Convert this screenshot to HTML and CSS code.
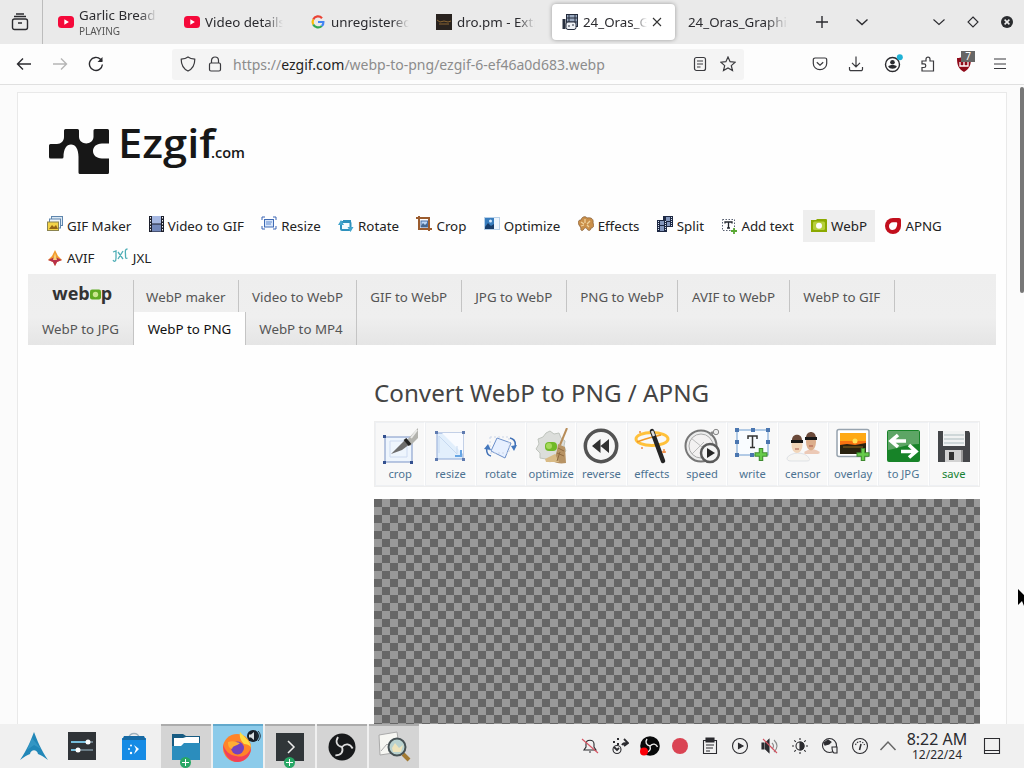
FILE: index.html
```html
<!DOCTYPE html>
<html lang="en">
<head>
  <meta charset="UTF-8">
  <title>Convert WebP to PNG / APNG</title>
  <link rel="stylesheet" href="styles.css">
</head>
<body>
  <div class="browser">
    <div class="tabbar">
      <div class="view-btn">
        <svg width="18" height="18" viewBox="0 0 18 18" class="line"><rect x="1.5" y="6" width="15" height="10.5" rx="2"/><path d="M3 3.5h12M5 1h8M7 10h4"/></svg>
      </div>
      <div class="tab">
        <svg width="16" height="16" viewBox="0 0 16 16"><rect y="2" width="16" height="12" rx="3.5" fill="#f5093a"/><path d="M6.3 5.3v5.4l4.6-2.7z" fill="#fff"/></svg>
        <div class="tab-title playing"><span>Garlic Bread</span><small>PLAYING</small></div>
      </div>
      <div class="tab">
        <svg width="16" height="16" viewBox="0 0 16 16"><rect y="2" width="16" height="12" rx="3.5" fill="#f5093a"/><path d="M6.3 5.3v5.4l4.6-2.7z" fill="#fff"/></svg>
        <div class="tab-title">Video details</div>
      </div>
      <div class="tab">
        <svg width="16" height="16" viewBox="0 0 16 16" fill="none" stroke-width="2.2"><path d="M12 4.2A5.3 5.3 0 0 0 3.2 5.5" stroke="#ea4335"/><path d="M3.2 5.5a5.5 5.5 0 0 0 0 5" stroke="#fbbc05"/><path d="M3.2 10.5a5.5 5.5 0 0 0 8.6 1.5" stroke="#34a853"/><path d="M11.8 12A5 5 0 0 0 13.4 8H8" stroke="#4285f4"/></svg>
        <div class="tab-title">unregistered</div>
      </div>
      <div class="tab">
        <svg width="16" height="16" viewBox="0 0 16 16"><rect width="16" height="16" fill="#29231f"/><path d="M1 6l3 2 4-1 4 1 3-1M3 10h10" stroke="#8a6532" fill="none"/></svg>
        <div class="tab-title">dro.pm - Extra</div>
      </div>
      <div class="tab active">
        <svg width="16" height="16" viewBox="0 0 16 16"><rect x="4.5" y=".5" width="11" height="12" fill="#9aa9c0" stroke="#242c3c"/><path d="M7 1v11M13 1v11M5 4h10M5 8h10" stroke="#242c3c"/><rect x=".5" y="5" width="3" height="10" fill="#28303f"/><rect x="4" y="8" width="10" height="7.5" rx="2" fill="#eef1f6" stroke="#242c3c"/><path d="M6 12h2M10 11h2" stroke="#242c3c"/></svg>
        <div class="tab-title">24_Oras_Graphics</div>
        <svg class="tab-close" width="10" height="10" viewBox="0 0 10 10"><path d="M1 1l8 8M9 1L1 9"/></svg>
      </div>
      <div class="tab plain">
        <div class="tab-title">24_Oras_Graphics</div>
      </div>
      <div class="tab-tools">
        <svg width="14" height="14" viewBox="0 0 14 14" class="line"><path d="M7 1v12M1 7h12"/></svg>
        <svg width="14" height="14" viewBox="0 0 14 14" class="line"><path d="M1.5 4.5L7 9.5l5.5-5"/></svg>
      </div>
      <div class="window-tools">
        <svg width="14" height="14" viewBox="0 0 14 14" class="line thin"><path d="M1.5 4.5L7 9.5l5.5-5"/></svg>
        <svg width="14" height="14" viewBox="0 0 14 14" class="line thin"><path d="M7 2l5 5-5 5-5-5z"/></svg>
        <svg width="14" height="14" viewBox="0 0 14 14"><circle cx="7" cy="7" r="6" fill="#2a2c2f"/><path d="M4.6 4.6l4.8 4.8M9.4 4.6L4.6 9.4" stroke="#eee" stroke-width="1.5"/></svg>
      </div>
    </div>

    <div class="toolbar">
      <div class="nav-buttons">
        <svg width="16" height="16" viewBox="0 0 16 16" class="line"><path d="M15 8H1.5M7 2.5L1.5 8 7 13.5"/></svg>
        <svg width="16" height="16" viewBox="0 0 16 16" class="line faded"><path d="M1 8h13.5M9 2.5L14.5 8 9 13.5"/></svg>
        <svg width="16" height="16" viewBox="0 0 16 16" class="line"><path d="M14.4 8.5A6.5 6.5 0 1 1 12.5 3.3L14 4.8"/><path d="M14.5 1v5h-5z" fill="#2b2b2f" stroke="none"/></svg>
      </div>
      <div class="urlbar">
        <svg width="16" height="16" viewBox="0 0 16 16" class="line light"><path d="M8 1C6 2.5 3.5 3 1.2 3.2c0 5.8 2 9.5 6.8 11.8 4.8-2.3 6.8-6 6.8-11.8C12.5 3 10 2.5 8 1z"/></svg>
        <svg width="14" height="16" viewBox="0 0 14 16" class="line light"><rect x="1.5" y="7" width="11" height="8" rx="1.5"/><path d="M3.5 7V4.5a3.5 3.5 0 0 1 7 0V7"/></svg>
        <div class="url">https://<b>ezgif.com</b>/webp-to-png/ezgif-6-ef46a0d683.webp</div>
        <svg width="16" height="16" viewBox="0 0 16 16" class="line light"><rect x="2.5" y="1.5" width="11" height="13" rx="2"/><path d="M5 5h6M5 8h6M5 11h3.5"/></svg>
        <svg width="16" height="16" viewBox="0 0 16 16" class="line light"><path d="M8 1l2.1 4.7 5.1.5-3.9 3.4 1.2 5L8 12l-4.5 2.6 1.2-5L.8 6.2l5.1-.5z"/></svg>
      </div>
      <div class="ext-buttons">
        <svg width="16" height="16" viewBox="0 0 16 16" class="line light"><path d="M3 2h10a1.7 1.7 0 0 1 1.7 1.7V7.5a6.7 6.2 0 0 1-13.4 0V3.7A1.7 1.7 0 0 1 3 2z"/><path d="M4.8 6.3L8 9.3l3.2-3"/></svg>
        <svg width="16" height="16" viewBox="0 0 16 16" class="line light"><path d="M8 .5v10M4 6.8l4 4 4-4M1.5 11v2.2A1.5 1.5 0 0 0 3 14.7h10a1.5 1.5 0 0 0 1.5-1.5V11"/></svg>
        <svg width="20" height="20" viewBox="0 0 20 20" class="line"><circle cx="9.5" cy="10.5" r="7"/><circle cx="9.5" cy="8.2" r="2.3" fill="#2b2b2f" stroke="none"/><path d="M5.2 12.5c1-2 7.6-2 8.6 0-1.5 3-7 3-8.6 0z" fill="#2b2b2f" stroke="none"/><circle cx="16.8" cy="3.2" r="3" fill="#1fb2d6" stroke="none"/></svg>
        <svg width="16" height="16" viewBox="0 0 16 16" class="line light"><path d="M2 5h4V3.2a2 2 0 0 1 4 0V5h3.5v10H2v-3.5h2a1.8 1.8 0 0 0 0-3.6H2z"/></svg>
        <div class="ublock">
          <svg width="16" height="16" viewBox="0 0 16 16"><path d="M8 0c2 1.5 4.5 2 7 2 0 7-1.5 11-7 14C2.5 13 1 9 1 2c2.5 0 5-.5 7-2z" fill="#900b1b"/><path d="M4 6v4h4V6M8 10h4V6" stroke="#fff" fill="none" stroke-width="1.3"/></svg>
          <span class="badge">7</span>
        </div>
        <svg width="16" height="16" viewBox="0 0 16 16" class="line light"><path d="M2 3h12M2 8h12M2 12.5h12"/></svg>
      </div>
    </div>

    <div class="viewport">
      <div class="page">
        <div class="logo">
          <svg width="200" height="54" viewBox="0 0 200 54">
            <path d="M17.5 5h12A1.500 1.500 0 0 1 31 6.500V13c.5 8.500 14 8.500 14.500 0V6.500A1.500 1.500 0 0 1 47 5h12.500A1.500 1.500 0 0 1 61 6.500V19.500H54c-12 0-12 15 0 15h7V48.500a1.500 1.500 0 0 1-1.500 1.500H32a1.500 1.500 0 0 1-1.500-1.500V33c0-8-3-12.500-7.500-12.500S15.500 25 15.500 33a1.500 1.500 0 0 1-1.500 1.500H2.500A1.500 1.500 0 0 1 1 33V21.500A1.500 1.500 0 0 1 2.500 20H9c4 0 7-3 7-7V6.500A1.500 1.500 0 0 1 17.500 5z" fill="#171717"/>
            <text x="70" y="34" class="logo-name" textLength="97" lengthAdjust="spacingAndGlyphs">Ezgif</text>
            <text x="163" y="34" class="logo-com" textLength="34" lengthAdjust="spacingAndGlyphs">.com</text>
          </svg>
        </div>

        <nav class="main-menu">
          <a><svg width="16" height="16" viewBox="0 0 16 16"><rect x="4.5" y=".5" width="11" height="9" fill="#dbe8f4" stroke="#5f86ad"/><rect x="2.5" y="3" width="11" height="9" fill="#eef5fb" stroke="#5f86ad"/><rect x=".5" y="6" width="11" height="8.5" fill="#f3d348" stroke="#8b8450"/><path d="M2 13l3-4 2 2 2-2 2 4z" fill="#946416"/></svg>GIF Maker</a>
          <a><svg width="15" height="16" viewBox="0 0 15 16"><rect width="15" height="16" fill="#1c1f2c"/><rect x="3" width="9" height="7.5" fill="#a6b8e2"/><rect x="3" y="8.5" width="9" height="7" fill="#7388ba"/><path d="M1.5 1v15M13.5 1v15" stroke="#f2f2f2" stroke-dasharray="1.5 1.5"/></svg>Video to GIF</a>
          <a><svg width="16" height="16" viewBox="0 0 16 16"><rect x="3.5" y="3.5" width="9" height="7.5" fill="#d8e6fa" stroke="#3f6bb5"/><path d="M5 6h6M5 8h5" stroke="#628bce"/><path d="M1 4V1h3M12 1h3v3M1 10v3h3M12 13h3v-3" fill="none" stroke="#3a65b4"/></svg>Resize</a>
          <a class="low"><svg width="16" height="16" viewBox="0 0 16 16"><rect x="3" y="4" width="9.5" height="8" rx="1" fill="#f4fbff" stroke="#2e91bd" stroke-width="2"/><path d="M0 7l3-5 3 5zM9.5 9l3 5 3-5z" fill="#42a5cd"/><path d="M5 3h8" stroke="#2e91bd" stroke-width="2"/></svg>Rotate</a>
          <a><svg width="16" height="16" viewBox="0 0 16 16"><path d="M3 0v13h13M0 2h13v13" fill="none" stroke="#9b5c2e" stroke-width="2"/><rect x="5" y="5" width="6.5" height="6" fill="#bbd5f4" stroke="#4870a7"/><path d="M5 10l2-3 2 2 2-2v4H5z" fill="#466891"/></svg>Crop</a>
          <a><svg width="16" height="16" viewBox="0 0 16 16"><rect x=".5" y="1.5" width="15" height="12" fill="#edf5fd" stroke="#b8d0e8"/><rect x="1" y="2" width="9" height="11" fill="#387dbe"/><path d="M1 11l3-4 3 3 3-2v5H1z" fill="#173d6b"/><circle cx="6.5" cy="5" r="1.5" fill="#d5eaff"/></svg>Optimize</a>
          <a><svg width="16" height="16" viewBox="0 0 16 16"><path d="M1 9c-2-4 0-5 2-5 1-4 5-4 6-2 4-1 7 1 6 5 2 3 0 5-2 5 0 3-3 3-4 1-1-1-2-2-3 0-2 3-4 1-3-1z" fill="#c98f4a" stroke="#80562e" stroke-width=".7"/><path d="M3 6l3 2M7 3v4M12 5l-3 3M3 10l3-1M11 11l-2-2" stroke="#f0d29b" stroke-width="1.3"/></svg>Effects</a>
          <a><svg width="16" height="16" viewBox="0 0 16 16"><path d="M6 0h10v11H6zM0 4h10v12H0z" fill="#1d2843"/><path d="M9 1h4v4H9zM3 5h4v4H3zM3 10h4v5H3zM10 6h3v4h-3z" fill="#8497bd"/><path d="M1.5 5v10M8.5 5v10M14.5 1v9" stroke="#dbe3f2" stroke-dasharray="1 1"/></svg>Split</a>
          <a class="low"><svg width="16" height="16" viewBox="0 0 16 16"><rect x="1.5" y="1.5" width="12" height="11" fill="none" stroke="#586071" stroke-dasharray="1.5 1.5"/><path d="M4 5.5V4h7v1.5M7.5 4v6M6 10h3" fill="none" stroke="#22262d" stroke-width="1.3"/><path d="M13 10v6M10 13h6" stroke="#59a833" stroke-width="1.8"/></svg>Add text</a>
          <a class="low selected"><svg width="16" height="16" viewBox="0 0 16 16"><path d="M0 2h5l1-1h9a1 1 0 0 1 1 1v12H0z" fill="#8ba900"/><rect x="2" y="3.5" width="12" height="8.5" rx="1.5" fill="#b6cf3d"/><circle cx="8" cy="7.8" r="3" fill="#fff"/></svg>WebP</a>
          <a class="low"><svg width="16" height="16" viewBox="0 0 16 16"><path d="M8 0h6a2 2 0 0 1 2 2v6a8 8 0 1 1-8-8z" fill="#c20f1d"/><path d="M8 4.3h3c1 0 1.3.5 1.2 1.5C12 9.5 10.5 12 7.5 12 5 12 4 10 4 8.2c0-2.2 1.8-3.9 4-3.9z" fill="#fff"/></svg>APNG</a>
          <a class="low"><svg width="16" height="16" viewBox="0 0 16 16"><path d="M8 0l3 6 4 4-5 2-2 4-2-4-5-2 4-4z" fill="#f19a2d"/><path d="M8 7l7 3-5 2-2 4-2-4-5-2z" fill="#b72f4b"/><path d="M8 3l2 7H6z" fill="#f7d27a"/></svg>AVIF</a>
          <a class="jxl"><svg width="16" height="16" viewBox="0 0 16 16" fill="none" stroke="#4faeb6" stroke-width="1.3"><path d="M1 4l3-1v7c0 4-2 4-3 2M6 4l5 7M11 3l-5 8M15.5 1c-3 0-2 3-2 6 0 3 0 4 2 3"/></svg>JXL</a>
        </nav>

        <div class="sub-menu">
          <div class="sub-row">
            <div class="webp-logo">web<svg width="11" height="11" viewBox="0 0 11 11"><rect width="11" height="10" y=".5" rx="2" fill="#5faa22"/><circle cx="5.5" cy="5.5" r="2.7" fill="#c9e68d"/></svg>p</div>
            <a>WebP maker</a>
            <a class="w118">Video to WebP</a>
            <a class="w104">GIF to WebP</a>
            <a>JPG to WebP</a>
            <a class="w111">PNG to WebP</a>
            <a class="w112">AVIF to WebP</a>
            <a class="w104">WebP to GIF</a>
          </div>
          <div class="sub-row second">
            <a class="w106">WebP to JPG</a>
            <a class="w112 current">WebP to PNG</a>
            <a class="w111">WebP to MP4</a>
          </div>
        </div>

        <main class="content">
          <h1>Convert WebP to PNG / APNG</h1>
          <div class="tools">
            <a><svg width="36" height="36" viewBox="0 0 36 36"><rect x="3" y="9" width="27" height="25" fill="#eef5fd" stroke="#7b93c6"/><path d="M8 13h17v16H8z" fill="none" stroke="#cddaf0"/><g fill="#33508f"><rect x="1" y="7" width="3" height="3"/><rect x="1" y="33" width="3" height="3"/><rect x="28" y="33" width="3" height="3"/></g><path d="M9 26L24 11l4 5-8 6z" fill="#6d6d6d"/><path d="M24 13L36 0v10l-8 8z" fill="#b3b3ae"/><path d="M29 10l6-8" stroke="#e8e8e6" stroke-width="2"/><path d="M23 11l5 6" stroke="#222" stroke-width="3.5"/></svg>crop</a>
            <a><svg width="36" height="36" viewBox="0 0 36 36"><rect x="5" y="5" width="26" height="26" fill="#e2effc" stroke="#8ea8d6"/><path d="M10 5h21v21z" fill="#f9fbff"/><path d="M7 8l18 18v-8M7 8v17" fill="none" stroke="#c7d9f0"/><path d="M29 22v6h-6" fill="none" stroke="#66a5e4" stroke-width="2"/><g fill="#5f7bb0"><rect x="3" y="3" width="3" height="3"/><rect x="30" y="3" width="3" height="3"/><rect x="3" y="30" width="3" height="3"/><rect x="30" y="30" width="3" height="3"/></g></svg>resize</a>
            <a><svg width="36" height="36" viewBox="0 0 36 36"><path d="M14 10l14 5-6 15-14-7z" fill="#e7f0ff" stroke="#6b8fca"/><path d="M7 9h19v16H7z" fill="none" stroke="#ccd6e8" stroke-dasharray="2 2"/><path d="M8 28c-4-1-5-4-4-9M27 10c5 1 6 4 5 9" fill="none" stroke="#4271b6" stroke-width="1.5"/><path d="M1 21l4-5 3 6zM28 18l6-1-3 6z" fill="#4377bd"/></svg>rotate</a>
            <a><svg width="36" height="36" viewBox="0 0 36 36"><path d="M13 5l4-2 4 3 5-1 2 5 4 3-1 5 2 5-4 3-2 5h-6l-4 3-4-3-6-1v-5l-4-4 3-5-1-5 5-2z" fill="#dcdedb" stroke="#bfc4bd"/><rect x="12" y="14" width="12" height="9" rx="4" fill="#70b927"/><circle cx="16" cy="18" r="3" fill="#a6d95c"/><path d="M34 0l-7 17" stroke="#b78c58" stroke-width="2"/><path d="M25 16l7 3 1 16c-6 1-10 0-14-2 4-5 5-10 6-17z" fill="#b79364"/><path d="M12 31l10-5 4 8H13z" fill="#d9bb86"/><path d="M25 20l6 3M24 25l7 3M27 24l-3 9" stroke="#8f6a40"/></svg>optimize</a>
            <a><svg width="36" height="36" viewBox="0 0 36 36"><circle cx="18" cy="18" r="15.7" fill="#f6f6f6" stroke="#535353" stroke-width="3.5"/><path d="M17.5 11v14L9 18zM26 11v14l-8.5-7z" fill="#303030"/></svg>reverse</a>
            <a><svg width="36" height="36" viewBox="0 0 36 36"><ellipse cx="18" cy="11" rx="16" ry="6.5" fill="none" stroke="#ffc13b" stroke-width="3"/><path d="M3 14c7-3 12-4 24-7" fill="none" stroke="#f29a26" stroke-width="1.5"/><path d="M18 3l11 30" stroke="#252525" stroke-width="4.5" stroke-linecap="round"/><path d="M18 3l2 5" stroke="#ddd" stroke-width="2.5"/><path d="M5 4h2M7 20h2M30 21v4M28 24h4" stroke="#ef8a43" stroke-width="1.5"/></svg>effects</a>
            <a><svg width="36" height="36" viewBox="0 0 36 36"><circle cx="17" cy="18" r="15.5" fill="#ececec" stroke="#777" stroke-width="2"/><circle cx="17" cy="18" r="12" fill="#f3f1f1" stroke="#aaa"/><path d="M7 10l17 14M8 26l12-12" stroke="#bbb"/><circle cx="32" cy="4" r="2.7" fill="#eee" stroke="#888"/><path d="M26 7l3-3" stroke="#888" stroke-width="2.5"/><circle cx="26" cy="25" r="9" fill="#f4f4f4" stroke="#5a5a5a" stroke-width="2.5"/><path d="M23 20v10l8-5z" fill="#252525"/></svg>speed</a>
            <a><svg width="36" height="36" viewBox="0 0 36 36"><rect x="3" y="2" width="31" height="25" fill="#f9fcff" stroke="#6d9bd0"/><g fill="#4a76b0"><rect x="1" y="0" width="4" height="4"/><rect x="17" y="0" width="4" height="4"/><rect x="32" y="0" width="4" height="4"/><rect x="1" y="12" width="4" height="4"/><rect x="32" y="12" width="4" height="4"/><rect x="1" y="25" width="4" height="4"/><rect x="16" y="25" width="4" height="4"/></g><path d="M14 11V8h9v3M18.5 8v11M16 19.5h5" fill="none" stroke="#333" stroke-width="1.5"/><path d="M27 20v13M20.5 26.5h13" stroke="#3f8a31" stroke-width="4.5"/><path d="M27 21v11M21.5 26.5h11" stroke="#67cc4b" stroke-width="2.5"/></svg>write</a>
            <a><svg width="36" height="36" viewBox="0 0 36 36"><path d="M2 30c3-6 18-7 22 0 1 2 1 3-4 3H6c-3 0-4-1-4-3z" fill="#f6f5f2" stroke="#dfe2e6"/><path d="M19 25c3-5 13-5 16 0l-2 1H20z" fill="#ecc9b6"/><ellipse cx="12" cy="17" rx="5.5" ry="8" fill="#f1d5b8"/><ellipse cx="26" cy="14" rx="5" ry="8.5" fill="#dcae8c"/><path d="M7 12c0-7 10-7 10 0zM21 10c0-8 10-8 10 0z" fill="#6b4a3a"/><path d="M6 12h12v3H6zM20 9h12v3H20z" fill="#171717"/><path d="M10 21h4M24 18h4" stroke="#a95648"/></svg>censor</a>
            <a><svg width="36" height="36" viewBox="0 0 36 36"><rect x="2" y="1.5" width="32" height="27" rx="2" fill="#fff" stroke="#97a3ae" stroke-width="1.5"/><path d="M5 5h26v13H5z" fill="#ffa914"/><path d="M5 13h26v5H5z" fill="#f77111"/><path d="M5 17l7-1 8 1 11-2v11H5z" fill="#29220f"/><circle cx="20" cy="13" r="2.5" fill="#ffe057"/><path d="M8 19h20" stroke="#8c651e"/><path d="M28 20v13M21.5 26.5h13" stroke="#3f8a31" stroke-width="4.5"/><path d="M28 21v11M22.5 26.5h11" stroke="#67cc4b" stroke-width="2.5"/></svg>overlay</a>
            <a><svg width="36" height="36" viewBox="0 0 36 36"><rect x="2" y="2" width="33" height="32" rx="2" fill="#178328"/><path d="M3 3h31v13C23 16 14 20 3 22z" fill="#5da565"/><path d="M13 7l-7 6 7 6M6 13h15M24 17l7 6.500-7 6M31 23.500H16" fill="none" stroke="#fff" stroke-width="3.6"/></svg>to JPG</a>
            <a class="save"><svg width="36" height="36" viewBox="0 0 36 36"><path d="M2 3h31l1 2v29H2V3z" fill="#444649"/><rect x="7" y="3" width="22" height="15" fill="#f0f2f2"/><path d="M8 7h20M8 11h20M8 15h20" stroke="#adbcbf"/><rect x="9" y="22" width="17" height="12" fill="#d2d2d2"/><rect x="13" y="24" width="5" height="8" fill="#333"/><path d="M26 22v12" stroke="#999" stroke-width="2"/></svg>save</a>
          </div>
          <div class="preview"></div>
        </main>
      </div>
      <div class="scrollbar"></div>
    </div>
  </div>

  <div class="taskbar">
    <div class="launchers">
      <div class="task start"><svg width="28" height="28" viewBox="0 0 28 28"><path d="M14 0c3 8 7 18 14 28-4-3-7-5-10-6-1-5-7-5-8 0-3 1-6 3-10 6C7 18 11 8 14 0z" fill="#2187b8"/><path d="M12 6l9 11-7-4-7 5z" fill="#55b3d9" opacity=".35"/></svg></div>
      <div class="task"><svg width="28" height="28" viewBox="0 0 28 28"><path d="M0 0h28v28H0z" fill="#303438"/><path d="M3 10h22M3 18h22" stroke="#697a84" stroke-width="2"/><path d="M3 10h15M3 18h6" stroke="#77bddb" stroke-width="2"/><circle cx="20" cy="10" r="2.5" fill="#fff"/><circle cx="10" cy="18" r="2.5" fill="#fff"/></svg></div>
      <div class="task"><svg width="28" height="28" viewBox="0 0 28 28"><path d="M9 6c0-6 10-6 10 0" fill="none" stroke="#9fb0bc" stroke-width="1.5"/><path d="M2 6h24v22H2z" fill="#168be5"/><path d="M4 4h20l2 4H2z" fill="#176aa4"/><g fill="#fff"><path d="M14 13l5 4-5 5 2-5z"/><circle cx="9" cy="17" r="1"/><circle cx="11" cy="21" r="1.2"/><circle cx="11" cy="13.5" r="1"/></g></svg></div>
      <div class="task open"><svg width="28" height="31" viewBox="0 0 28 31"><path d="M0 2h11l3 2h14v20H0z" fill="#175b82"/><path d="M2 6h9l3-1h13v9H2z" fill="#fff"/><path d="M0 14h9l3-3h16v17H0z" fill="#2b8dbd"/></svg><i class="plus"></i></div>
      <div class="task open focused"><svg width="32" height="31" viewBox="0 0 32 31"><circle cx="15" cy="16" r="14" fill="#ff8429"/><path d="M1 12c0 10 6 18 15 18 8-1 13-7 13-14-3 7-8 10-15 8C7 23 3 19 1 12z" fill="#f0405b"/><path d="M18 0c3 4 10 8 11 15-2-2-4-3-7-3-3-3-5-7-4-12z" fill="#ffdc42"/><circle cx="15.5" cy="16" r="6.5" fill="#7542bd"/><path d="M6 10c5-2 8 0 12 1-3 3-7 2-8 6-3-1-4-3-4-7z" fill="#ffae33"/></svg>
        <svg class="audio" width="14" height="14" viewBox="0 0 14 14"><circle cx="6" cy="7" r="6" fill="#182029"/><path d="M2 5.5h2L7 3v8L4 8.5H2z" fill="#d8dde0"/><path d="M9 4c2 2 2 4 0 6M11 2c3 3 3 7 0 10" fill="none" stroke="#26333e"/></svg></div>
      <div class="task open"><svg width="28" height="28" viewBox="0 0 28 28"><path d="M0 0h28v28H0z" fill="#303639"/><path d="M12 8l6 6-6 6" fill="none" stroke="#eee" stroke-width="1.5"/></svg><i class="plus"></i></div>
      <div class="task open"><svg width="28" height="28" viewBox="0 0 28 28"><circle cx="14" cy="14" r="13.5" fill="#17191b"/><g fill="none" stroke="#ddd" stroke-width="1.8"><path d="M14 14c-5-1-7-5-4-10"/><path d="M14 14c-5-1-7-5-4-10" transform="rotate(120 14 14)"/><path d="M14 14c-5-1-7-5-4-10" transform="rotate(240 14 14)"/></g></svg></div>
      <div class="task open"><svg width="34" height="32" viewBox="0 0 34 32"><path d="M2 4l18-3 3 20-20 3z" fill="#f7f7f3" stroke="#aaa"/><path d="M4 20l6-7 4 4 6-4" stroke="#aaa" fill="none"/><path d="M26 23l6 6" stroke="#a27a32" stroke-width="4"/><circle cx="20" cy="16" r="8.5" fill="#b9d2cf" stroke="#465154" stroke-width="2"/><path d="M15 17l3-5 4 5 4-3-2 7h-8z" fill="#eee3ba"/></svg></div>
    </div>

    <div class="tray">
      <svg width="18" height="18" viewBox="0 0 18 18" class="line thin"><path d="M3 13h12l-2-3V7c0-5-8-5-8 0v3zM8 15h2"/><path d="M1 2l16 14" stroke="#d65361"/></svg>
      <svg width="18" height="18" viewBox="0 0 18 18" class="line thin"><circle cx="6" cy="12.5" r="4"/><path d="M3 10l3 3 2-2M11 8c1-2 3-2 5-2M13 2l4 4-4 3" stroke-width="1.8"/><path d="M2 5h2M6 2h2M6 7h2" stroke-width="1.8"/></svg>
      <svg width="20" height="20" viewBox="0 0 20 20"><circle cx="10" cy="10" r="9.8" fill="#08090a"/><g fill="none" stroke="#eee" stroke-width="1.4"><path d="M10 10C6 9 5 6 7 3"/><path d="M10 10C6 9 5 6 7 3" transform="rotate(120 10 10)"/><path d="M10 10C6 9 5 6 7 3" transform="rotate(240 10 10)"/></g><circle cx="4" cy="15.5" r="4" fill="#fb0008"/></svg>
      <svg width="18" height="18" viewBox="0 0 18 18"><circle cx="9" cy="9" r="8" fill="#da4453"/></svg>
      <svg width="18" height="18" viewBox="0 0 18 18" class="line thin"><path d="M2.5 3.5h13v13h-13zM5 8h8M5 11h7M5 14h4"/><path d="M5 1h8v4H5z" fill="#2b2b2f"/></svg>
      <svg width="18" height="18" viewBox="0 0 18 18" class="line thin"><circle cx="9" cy="9" r="7.5"/><path d="M7.5 6.5v5L12 9z" fill="#2b2b2f"/></svg>
      <svg width="18" height="18" viewBox="0 0 18 18" class="line thin"><path d="M1 6h2v6H1zM4.5 6L8 2.5v13L4.5 12z" fill="#2b2b2f"/><path d="M11 6c2 2 2 4 0 6M13 3c4 4 4 8 0 12" stroke="#8a8a8a"/><path d="M2 2l14 14" stroke="#d65361"/></svg>
      <svg width="18" height="18" viewBox="0 0 18 18" class="line thin"><circle cx="9" cy="9" r="4"/><path d="M9 5a4 4 0 0 1 0 8z" fill="#2b2b2f"/><path d="M9 1v2M9 15v2M1 9h2M15 9h2M3.3 3.3l1.5 1.5M13.2 13.2l1.5 1.5M3.3 14.7l1.5-1.5M13.2 4.8l1.5-1.5"/></svg>
      <svg width="18" height="18" viewBox="0 0 18 18" class="line thin"><circle cx="8.5" cy="8.5" r="7"/><path d="M3 6l4-3 3 2-2 2-4 1z" fill="#2b2b2f"/><path d="M11 10h5v6h-3c-1.5-1-2-3-2-6z" fill="#efefef"/></svg>
      <svg width="18" height="18" viewBox="0 0 18 18" class="line thin"><circle cx="9" cy="9" r="7.5"/><path d="M4.5 8c1.5-4.5 7.5-4.5 9 0" stroke-dasharray="1.5 1.2"/><path d="M8.5 13l1.5-6" stroke-width="1.5"/></svg>
    </div>
    <svg class="tray-arrow" width="18" height="18" viewBox="0 0 18 18"><path d="M1.5 13L9 5l7.5 8"/></svg>
    <div class="clock"><span class="time">8:22 AM</span><span class="date">12/22/24</span></div>
    <svg width="18" height="18" viewBox="0 0 18 18" class="line thin peek"><path d="M1.5 1.5h15v15h-15zM2 13.5h14"/></svg>
  </div>

  <svg class="cursor" width="7" height="20" viewBox="0 0 7 20"><path d="M1 1v16l4-4 2 5V7z" fill="#000"/></svg>
</body>
</html>
```
FILE: styles.css
```css
* {
  box-sizing: border-box;
}

body {
  margin: 0;
  width: 1024px;
  height: 768px;
  overflow: hidden;
  display: flex;
  flex-direction: column;
  font-family: "Noto Sans", sans-serif;
  font-size: 13.33px;
  color: #2b2b2f;
  background: #fcfcfc;
}

svg {
  flex: none;
}

.line {
  fill: none;
  stroke: #2b2b2f;
  stroke-width: 1.4;
}

.line.light {
  stroke: #3a3a3e;
  stroke-width: 1.2;
}

.line.thin {
  stroke-width: 1.1;
}

.line.faded {
  stroke: #b5b5b5;
}

.browser {
  height: 724px;
  display: flex;
  flex-direction: column;
}

/* tabs */
.tabbar {
  height: 44px;
  flex: none;
  display: flex;
  align-items: center;
  background: #eaeaea;
}

.view-btn {
  width: 43px;
  height: 44px;
  padding: 13px 0 0 11px;
  border-right: 1px solid #bcbcbc;
  margin-right: 5px;
}

.tab {
  width: 126px;
  height: 36px;
  padding: 0 17px 0 10px;
  display: flex;
  align-items: center;
  gap: 5px;
}

.tab-title {
  flex: 1;
  overflow: hidden;
  white-space: nowrap;
  line-height: 18px;
  -webkit-mask-image: linear-gradient(to right, #000 78%, transparent);
  mask-image: linear-gradient(to right, #000 78%, transparent);
}

.playing span,
.playing small {
  display: block;
  line-height: 17px;
}

.playing small {
  font-size: 10px;
  line-height: 14px;
  color: #555;
}

.tab.active {
  width: 123px;
  margin-right: 3px;
  padding-right: 13px;
  border-radius: 4px;
  background: #fff;
  box-shadow: 0 0 4px rgba(0, 0, 0, 0.35);
}

.tab.plain {
  padding-right: 16px;
}

.tab-close {
  fill: none;
  stroke: #333;
  stroke-width: 1.1;
}

.tab-tools {
  display: flex;
  gap: 26px;
  margin-left: 11px;
}

.window-tools {
  display: flex;
  gap: 20px;
  margin-left: auto;
  padding-right: 10px;
}

/* address bar */
.toolbar {
  height: 41px;
  flex: none;
  display: flex;
  align-items: center;
  background: #fdfdfd;
  border-bottom: 1px solid #e0e0e0;
}

.nav-buttons {
  width: 172px;
  padding-left: 16px;
  display: flex;
  gap: 20px;
}

.urlbar {
  width: 572px;
  height: 31px;
  padding: 0 8px;
  display: flex;
  align-items: center;
  gap: 12px;
  background: #f4f4f4;
  border-radius: 3px;
}

.url {
  flex: 1;
  margin-left: -1px;
  font-size: 14px;
  color: #8c8c8c;
}

.url b {
  font-weight: normal;
  color: #222;
}

.ext-buttons {
  margin-left: auto;
  padding-right: 16px;
  display: flex;
  align-items: center;
  gap: 20px;
}

.ext-buttons svg:nth-child(3) {
  margin: 0 -3px 0 -1px;
}

.ublock {
  position: relative;
  height: 16px;
}

.badge {
  position: absolute;
  left: 5px;
  top: -5px;
  width: 14px;
  height: 11px;
  font-size: 10px;
  line-height: 11px;
  text-align: center;
  color: #fff;
  background: #666;
}

/* page */
.viewport {
  flex: 1;
  min-height: 0;
  display: flex;
  justify-content: space-between;
  padding-left: 17px;
  background: #fbfbfb;
}

.page {
  width: 990px;
  margin-top: 7px;
  padding: 0 10px;
  border: 1px solid #e9e9e9;
  border-bottom: none;
  background: #fefefe;
  overflow: hidden;
}

.scrollbar {
  width: 4px;
  height: 206px;
  margin-top: 2px;
  border-radius: 2px;
  background: #777;
}

.logo {
  height: 117px;
  padding: 31px 0 0 20px;
}

.logo-name {
  font-family: "Open Sans", sans-serif;
  font-size: 39px;
  font-weight: 600;
  fill: #171717;
}

.logo-com {
  font-family: "Open Sans", sans-serif;
  font-size: 14.5px;
  font-weight: 600;
  fill: #171717;
}

.main-menu {
  display: flex;
  flex-wrap: wrap;
  column-gap: 1.4px;
  padding: 0 36px 0 11px;
  height: 64px;
}

.main-menu a {
  height: 32px;
  padding: 0 8px;
  display: flex;
  align-items: center;
  gap: 4px;
  color: #222;
}

.main-menu a svg {
  margin-top: -4px;
}

.main-menu .low svg {
  margin-top: -1px;
}

.main-menu .selected {
  margin-right: 1px;
  background: #eee;
}

.main-menu .jxl {
  gap: 5px;
}

.sub-menu {
  height: 71px;
  padding-top: 6px;
  color: #555;
  background: linear-gradient(#eee, #efefef 60%, #e5e5e5);
}

.sub-row {
  display: flex;
  height: 32px;
}

.sub-row.second {
  height: 33px;
}

.sub-row a {
  width: 105.5px;
  line-height: 34px;
  text-align: center;
  white-space: nowrap;
  border-right: 1px solid #c4c4c4;
}

.sub-row .w104 { width: 104.5px; }
.sub-row .w106 { width: 106px; }
.sub-row .w111 { width: 111px; }
.sub-row .w112 { width: 112px; }
.sub-row .w118 { width: 118px; }

.sub-row .current {
  color: #111;
  background: #fefefe;
}

.webp-logo {
  width: 105.5px;
  padding-left: 4px;
  border-right: 1px solid #c4c4c4;
  font-family: "Open Sans", sans-serif;
  font-size: 18px;
  font-weight: 700;
  line-height: 26px;
  text-align: center;
  color: #333;
}

.content {
  padding: 32px 15px 0 346px;
}

.content h1 {
  margin: 0;
  height: 44px;
  font-size: 24.2px;
  font-weight: normal;
  line-height: 32px;
  white-space: nowrap;
  color: #444;
}

.tools {
  width: 606px;
  height: 66px;
  display: flex;
  border: 1px solid #eee;
  background: #f8f8f8;
}

.tools a {
  flex: 1 1 0;
  min-width: 0;
  padding-top: 5px;
  display: flex;
  flex-direction: column;
  align-items: center;
  font-size: 11.2px;
  line-height: 19px;
  color: #4c7291;
  border: 1px solid #eef0f3;
  border-right-color: #fff;
}

.tools .save {
  color: #168132;
}

.preview {
  width: 606px;
  height: 240px;
  margin-top: 12px;
  background: repeating-conic-gradient(#999 0 25%, #666 0 50%) 0 0 / 16px 16px;
}

/* taskbar */
.taskbar {
  height: 44px;
  display: flex;
  align-items: center;
  background: #f0f0f0;
}

.launchers {
  width: 581px;
  padding-left: 5px;
  display: flex;
  gap: 2px;
}

.task {
  position: relative;
  width: 50px;
  height: 44px;
  display: flex;
  align-items: center;
  justify-content: center;
}

.task.start {
  padding-left: 8px;
}

.task.open {
  background: #d4d4d4;
  border-top: 2px solid #acacac;
}

.task.focused {
  background: #8ccbea;
  border-top-color: #62a9cc;
}

.plus {
  position: absolute;
  left: 19px;
  bottom: 0;
  width: 11px;
  height: 11px;
  border-radius: 50%;
  background:
    linear-gradient(#fff, #fff) center / 7px 1px no-repeat,
    linear-gradient(#fff, #fff) center / 1px 7px no-repeat,
    #27a765;
}

.audio {
  position: absolute;
  right: 2px;
  top: 3px;
}

.tray {
  display: flex;
  align-items: center;
  gap: 12px;
}

.tray svg:nth-child(3) {
  margin: 0 -1px;
}

.tray-arrow {
  margin-left: 10px;
  fill: none;
  stroke: #666;
  stroke-width: 1.5;
}

.clock {
  width: 76px;
  margin-left: 2px;
  display: flex;
  flex-direction: column;
  align-items: center;
}

.time {
  font-size: 16px;
  line-height: 17px;
}

.date {
  font-size: 12px;
  line-height: 14px;
}

.peek {
  margin-left: 8px;
}

.cursor {
  position: absolute;
  right: 0;
  top: 588px;
}
```
